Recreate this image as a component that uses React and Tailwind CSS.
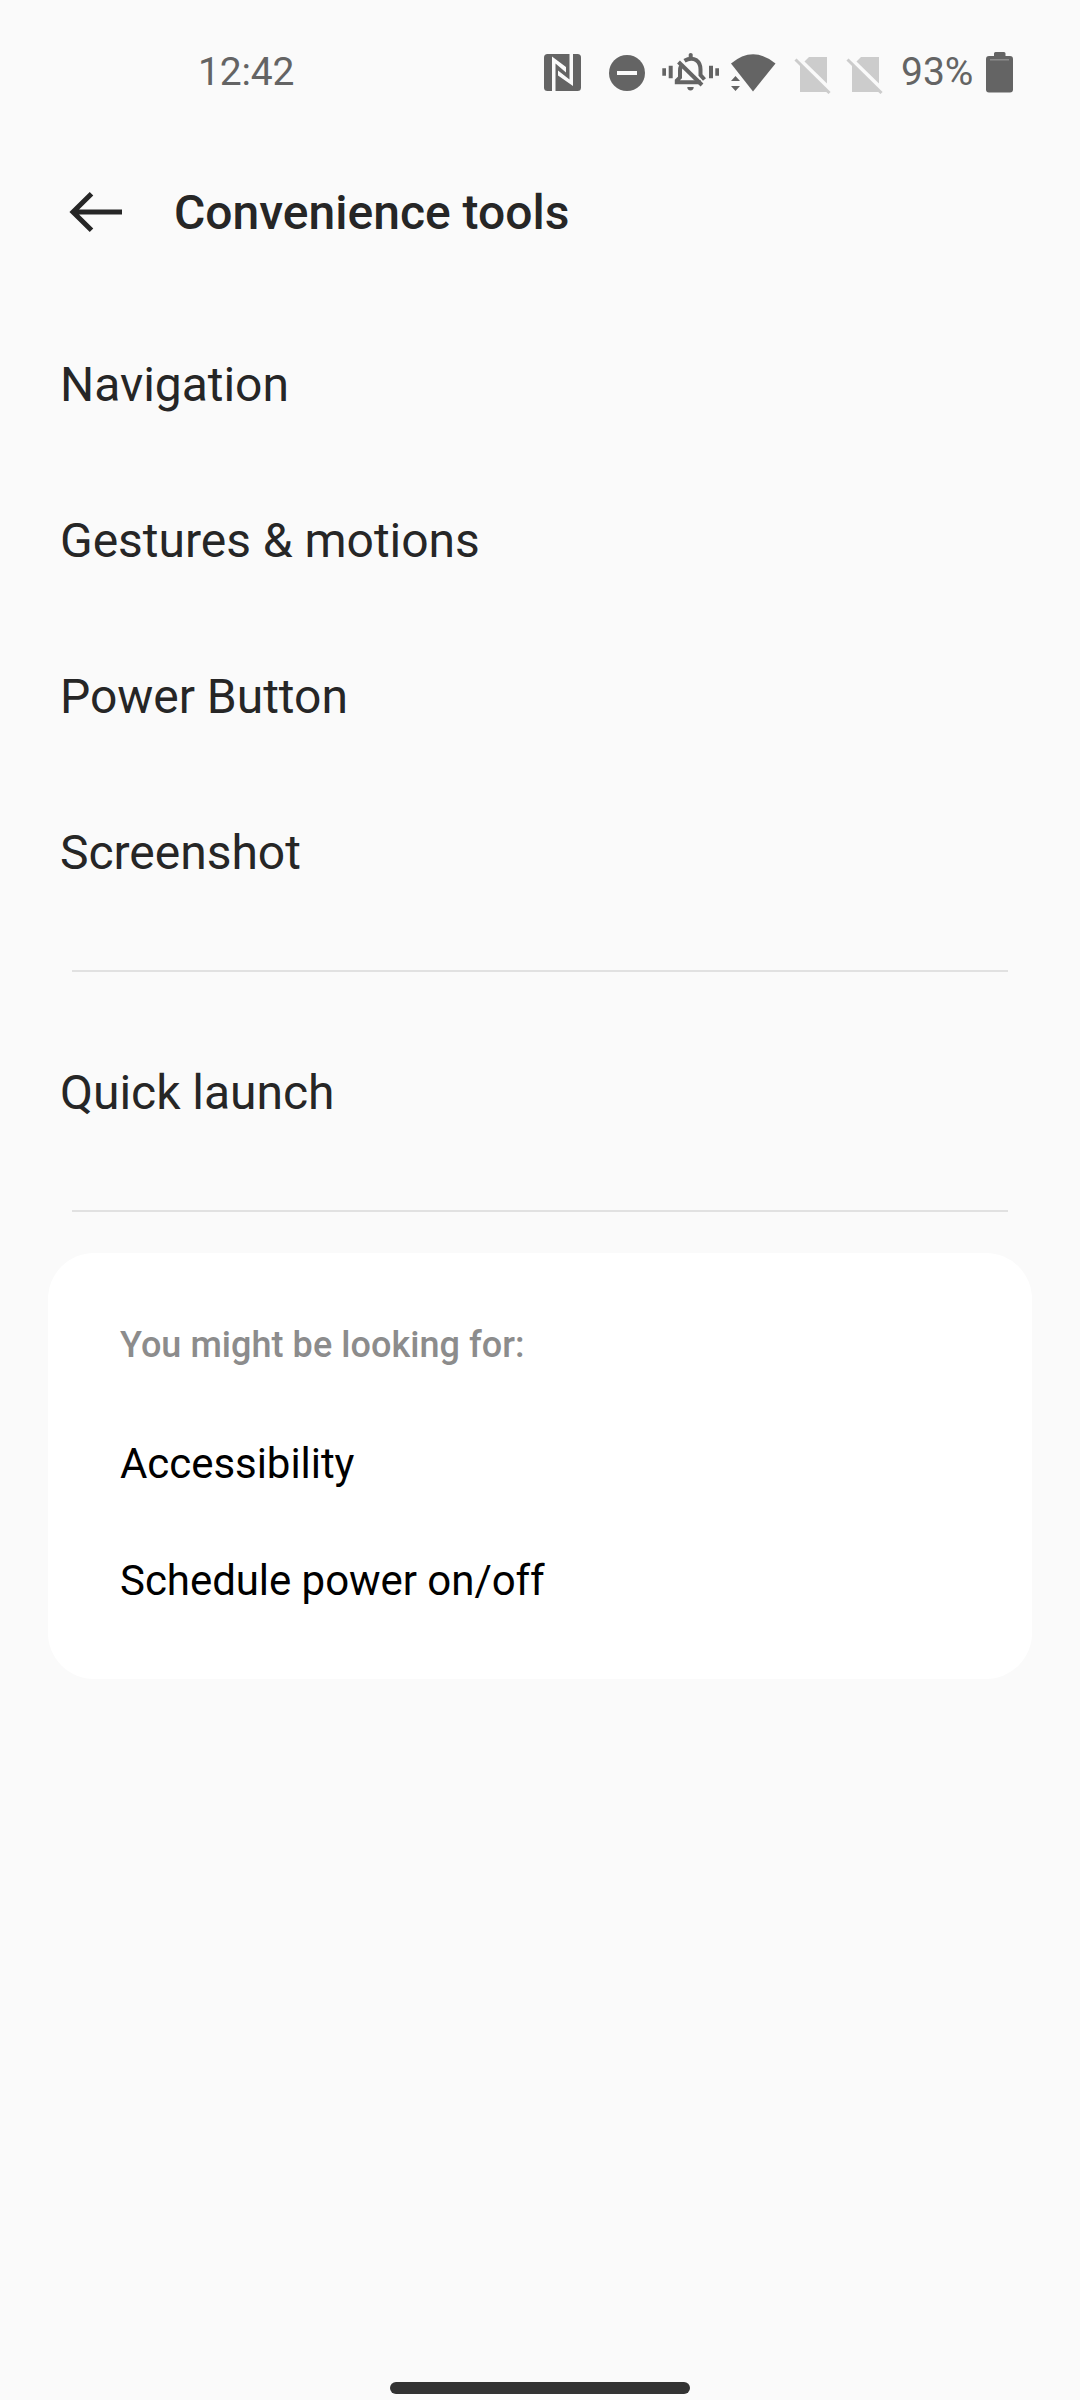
import React from 'react';

const tools = ['Navigation', 'Gestures & motions', 'Power Button', 'Screenshot'];
const suggestions = ['Accessibility', 'Schedule power on/off'];

// --- STATUS BAR ICONS ---
const NfcIcon = () => (
    <svg width="37" height="37" viewBox="0 0 37 37">
        <rect width="37" height="37" rx="3.5" fill="#646464" />
        <path d="M8 2.5L22 13V18.500L11.500 9.500V37H8ZM29 32L14 21.500V16.500L25.500 25.500V0H29Z" fill="#fafafa" />
    </svg>
);

const DoNotDisturbIcon = () => (
    <svg width="36" height="36" viewBox="0 0 36 36">
        <circle cx="18" cy="18" r="18" fill="#646464" />
        <rect x="8" y="16" width="20" height="4" fill="#fafafa" />
    </svg>
);

const VibrateIcon = () => (
    <svg width="57" height="38" viewBox="0 0 57 38">
        <g fill="#646464">
            <path d="M0.300 15.300h3.700v7.400H0.300zM6.700 12.700h4v12.600h-4zM47 12.700h4v12.600h-4zM53.300 15.300h3.700v7.400h-3.700z" />
            <path d="M26.700 1.500q0-1.500 2-1.500t2 1.500v3h-4zM25.300 34h6.400q0 3.400-3.200 3.400t-3.200-3.400z" />
        </g>
        <g fill="none" stroke="#646464" strokeWidth="4">
            <path d="M19 13q-1 2-1 5v6.500l-3.200 3v1.800h24" />
            <path d="M22.500 7.800q6.500-4 12-0.500 4 3 4 9v5.700l4 4.500" />
            <path d="M16.500 9L40 32" />
        </g>
    </svg>
);

const WifiIcon = () => (
    <svg width="46" height="38" viewBox="0 0 46 38">
        <path d="M1 9.500Q23-9 45.500 9.500L23 37.500Z" fill="#646464" />
        <path d="M1 27L5.500 22L10 27ZM1 32L5.500 37L10 32Z" fill="#646464" />
    </svg>
);

const NoSimIcon = () => (
    <svg width="37" height="37" viewBox="0 0 37 37">
        <path d="M10.500 4.500L15 0H33V26.500Z" fill="#cccccc" />
        <path d="M6 7.500L33.500 35H6Z" fill="#cccccc" />
        <path d="M1.500 2.500L35.500 36" stroke="#cccccc" strokeWidth="3" />
    </svg>
);

const BatteryIcon = () => (
    <svg width="27" height="41" viewBox="0 0 27 41">
        <path d="M8 1.500Q8 0 9.500 0h8.500q1.500 0 1.500 1.500V4H24q3 0 3 3v30.500q0 3-3 3H3q-3 0-3-3V7q0-3 3-3h5z" fill="#646464" />
        <rect x="4" y="7" width="19" height="1.500" fill="#8c8c8c" />
    </svg>
);

const StatusBar = () => (
    <header className="flex h-[145px] shrink-0 items-start pl-[198px] pr-[67px] text-[39px] text-[#646464]">
        <span className="mt-[49px] leading-[47px] tracking-[-0.2px]">12:42</span>
        <div className="ml-auto flex h-[145px] items-start">
            <div className="mt-[54px]"><NfcIcon /></div>
            <div className="ml-[28px] mt-[55px]"><DoNotDisturbIcon /></div>
            <div className="ml-[17px] mt-[53px]"><VibrateIcon /></div>
            <div className="ml-[11px] mt-[54px]"><WifiIcon /></div>
            <div className="ml-[18px] mt-[57px]"><NoSimIcon /></div>
            <div className="ml-[15px] mt-[57px]"><NoSimIcon /></div>
            <span className="ml-[18px] mt-[49px] w-[73px] whitespace-nowrap leading-[47px]">93%</span>
            <div className="ml-[12px] mt-[52px]"><BatteryIcon /></div>
        </div>
    </header>
);

const Divider = () => <hr className="mx-[72px] h-0.5 border-0 bg-[#e1e1e1]" />;

const ToolRow = ({ label }) => (
    <li className="flex h-[156px] items-center px-[60px] text-[48px] leading-[56px] tracking-[-0.03px] text-[#262626]">{label}</li>
);

const App = () => {
    return (
        <div className="flex h-[2400px] w-[1080px] flex-col overflow-hidden bg-[#fafafa] font-['Roboto',sans-serif]">
            <StatusBar />

            {/* Title bar */}
            <div className="flex h-[135px] shrink-0 items-center pb-[1px] pl-[69px]">
                <svg width="54" height="42" viewBox="0 0 54 42" fill="none" stroke="#262626" strokeWidth="5">
                    <path d="M22.500 2.700L4 21L22.500 39.300M4 21H53" />
                </svg>
                <h1 className="ml-[51px] mt-[2px] text-[48px] font-medium leading-[56px] text-[#262626]">Convenience tools</h1>
            </div>

            {/* Settings list */}
            <main className="mt-[27px]">
                <ul className="mb-[39px]">
                    {tools.map((label) => <ToolRow key={label} label={label} />)}
                </ul>
                <Divider />
                <ul className="mb-[39px] mt-[43px]">
                    <ToolRow label="Quick launch" />
                </ul>
                <Divider />

                {/* Related settings */}
                <section className="mx-12 mt-[41px] h-[426px] rounded-[46px] bg-white px-[72px] pt-[70px]">
                    <h2 className="text-[36px] font-medium leading-[44px] tracking-[0.05px] text-[#8c8c8c]">You might be looking for:</h2>
                    <ul className="mt-[38px] text-[42px] tracking-[-0.05px] text-black">
                        {suggestions.map((label) => (
                            <li key={label} className="flex h-[117px] items-center leading-[50px]">{label}</li>
                        ))}
                    </ul>
                </section>
            </main>

            {/* Gesture handle */}
            <div className="mb-1.5 mt-auto h-3 w-[300px] shrink-0 self-center rounded-full bg-[#323232]" />
        </div>
    );
};

export default App;
